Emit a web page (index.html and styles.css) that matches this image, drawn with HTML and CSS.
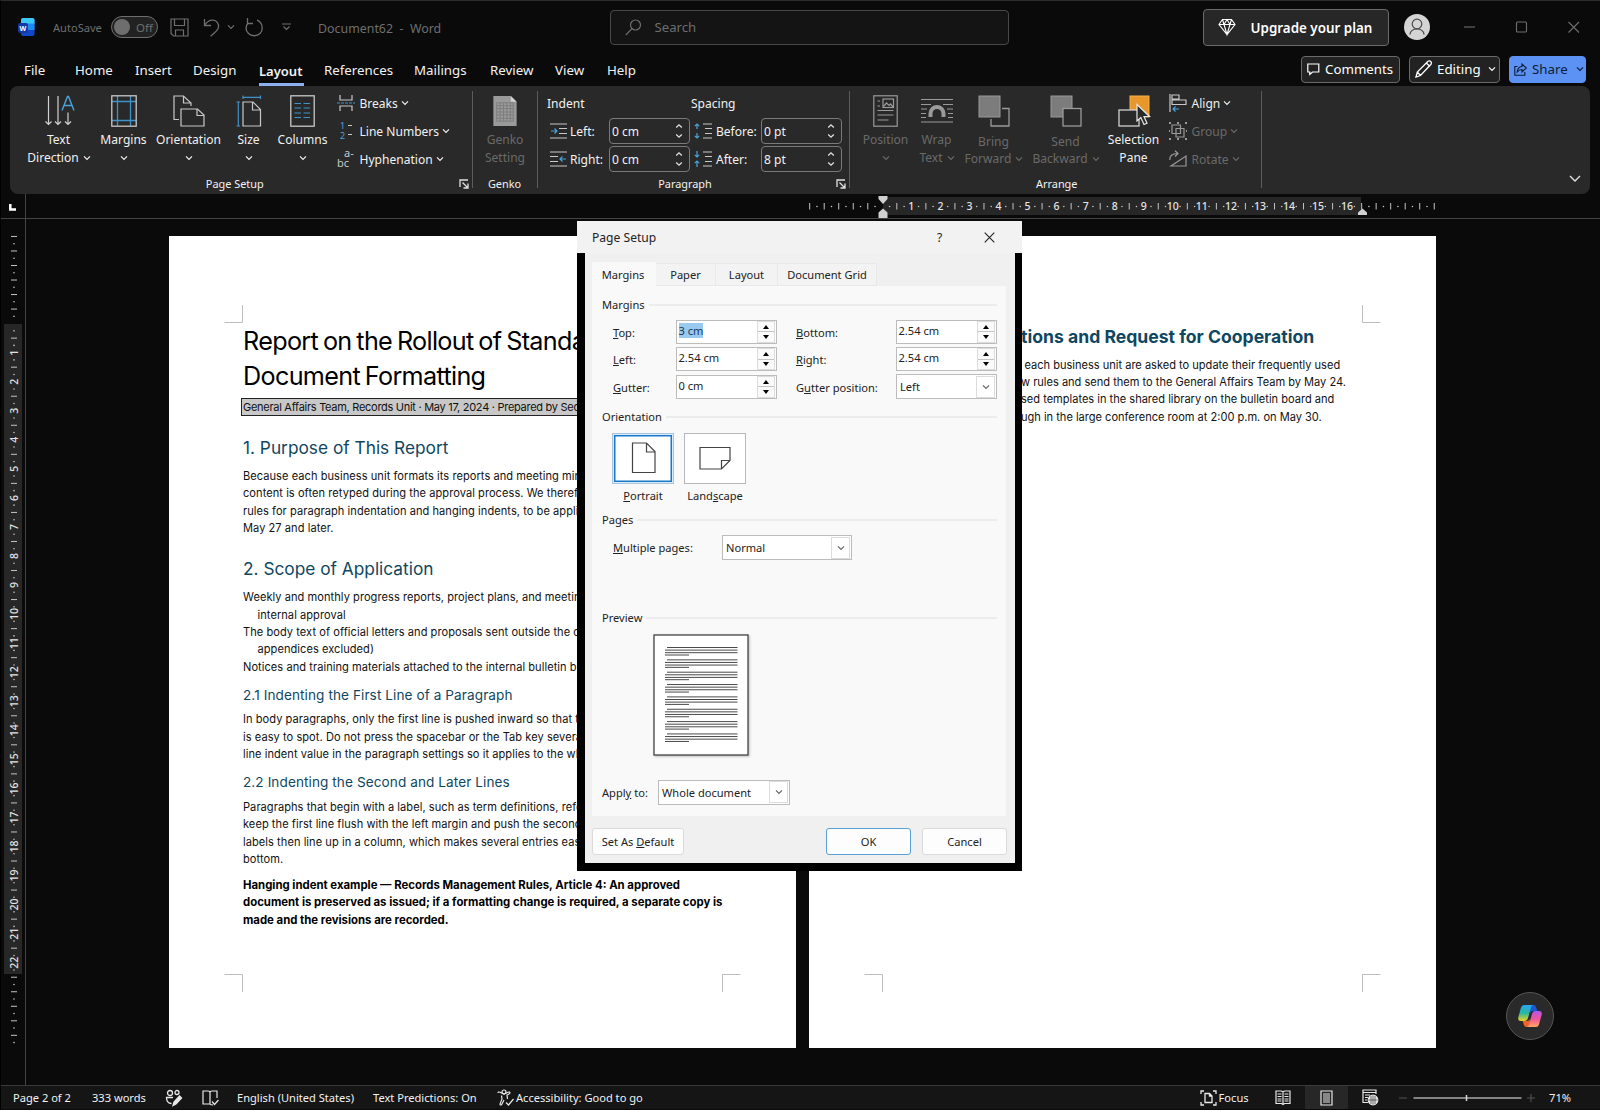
FILE: index.html
```html
<!DOCTYPE html>
<html lang="en">
<head>
  <meta charset="UTF-8" />
  <title>Document62 - Word</title>
  <link rel="stylesheet" href="styles.css">
</head>
<body>

  <!-- shared icon shapes -->
  <svg class="defs" width="0" height="0">
    <symbol id="chev" viewBox="0 0 8 6"><path d="M1 1.3 4 4.3 7 1.3" fill="none" stroke="currentColor" stroke-width="1.2"/></symbol>
    <symbol id="launcher" viewBox="0 0 11 10"><path d="M1 8V1h8M3.5 3.5l5 5M9 4.5V9H4.5" fill="none" stroke="#e0e0e0" stroke-width="1.3"/></symbol>
    <symbol id="updown" viewBox="0 0 8 16"><path d="M1.2 4.5 4 1.8l2.8 2.7M1.2 11.5 4 14.2l2.8-2.7" fill="none" stroke="#e0e0e0" stroke-width="1.3"/></symbol>
  </svg>

  <header class="titlebar">
    <svg class="word-logo" width="17" height="18" viewBox="0 0 17 18">
      <rect x="3" y="0" width="13.5" height="18" rx="2" fill="#1148c8"/>
      <path d="M5 0h9.500q2 0 2 2v4H3V2q0-2 2-2z" fill="#3cc8f5"/>
      <rect x="3" y="5.500" width="13.500" height="6.500" fill="#1c8cf0"/>
      <rect x="0" y="5" width="10" height="10" rx="2" fill="#1238a8"/>
      <text x="5" y="12.500" text-anchor="middle" class="logo-letter">W</text>
    </svg>
    <span class="autosave">AutoSave</span>
    <span class="toggle"><i></i>Off</span>
    <svg class="i-save" width="19" height="19" viewBox="0 0 19 19" fill="none" stroke="#6e6e6e" stroke-width="1.2"><path d="M1 1h17v17H3.500L1 15.500zM4.500 1v6.500h10V1M5.500 18v-6h8v6"/></svg>
    <svg class="i-undo" width="17" height="19" viewBox="0 0 17 19" fill="none" stroke="#6e6e6e" stroke-width="1.3"><path d="M1.500 1v6.500H8M1.500 7.500C4 3.500 7 2 10 2.200c4 .3 6 3.600 5.500 7-.4 3-4 6-8 9"/></svg>
    <svg class="i-undo-more" width="8" height="6"><use href="#chev"/></svg>
    <svg class="i-redo" width="19" height="20" viewBox="0 0 19 20" fill="none" stroke="#6e6e6e" stroke-width="1.3"><path d="M2.500 1v5.500H8M3 6C.5 9.500.5 13.500 3.500 16.500s8.500 3 11.500 0 3-8.500 0-11.500c-.8-.8-2-1.500-3-1.800"/></svg>
    <svg class="i-custom" width="9" height="8" viewBox="0 0 9 8" fill="none" stroke="#6e6e6e" stroke-width="1.200"><path d="M0 1h9M1.500 3.500l3 3 3-3"/></svg>
    <span class="doc-name">Document62&nbsp; -&nbsp; Word</span>
    <div class="search">
      <svg width="17" height="17" viewBox="0 0 17 17" fill="none" stroke="#6e6e6e" stroke-width="1.200"><circle cx="10.500" cy="6" r="5"/><path d="M7 9.700.8 16"/></svg>
      <span>Search</span>
    </div>
    <div class="upgrade">
      <svg width="18" height="18" viewBox="0 0 18 18" fill="none" stroke="#fff" stroke-width="1.100"><path d="M4.500 1.500h9L17 6.500 9 16.500 1 6.500zM1 6.500h16M4.500 1.500 6 6.500l3 10 3-10 1.500-5M6 6.500l3-5 3 5"/></svg>
      <span>Upgrade your plan</span>
    </div>
    <svg class="avatar" width="26" height="26" viewBox="0 0 26 26"><circle cx="13" cy="13" r="13" fill="#d4d4d4"/><g fill="none" stroke="#4a4a4a" stroke-width="1.200"><circle cx="13" cy="10" r="4.800"/><path d="M5.800 20.500c.8-3.700 3.500-5.500 7.200-5.500s6.400 1.800 7.200 5.500"/></g></svg>
    <svg class="win-buttons" width="116" height="14" viewBox="0 0 116 14" fill="none" stroke="#6e6e6e" stroke-width="1.100"><path d="M0 7h11"/><rect x="52.500" y="2" width="10" height="10" rx="1"/><path d="m104.500 2 10.500 10.500M115 2l-10.500 10.500"/></svg>
  </header>

  <nav class="tabs">
    <span>File</span><span>Home</span><span>Insert</span><span>Design</span><span class="active">Layout</span><span>References</span><span>Mailings</span><span>Review</span><span>View</span><span>Help</span>
    <div class="tab-button comments">
      <svg width="13" height="13" viewBox="0 0 13 13" fill="none" stroke="#fff" stroke-width="1.200"><path d="M.8 1h11v8H5.500L2.800 11.500V9h-2z"/></svg>Comments
    </div>
    <div class="tab-button editing">
      <svg width="18" height="18" viewBox="0 0 18 18" fill="none" stroke="#fff" stroke-width="1.300"><path d="m1 17 1.300-5L13 1.300q1.500-1 2.800.2t.2 2.800L5.500 15.500zM11.300 3 15 6.500M2.300 12l3.200 3.500"/></svg>Editing<svg class="chev" width="8" height="6"><use href="#chev"/></svg>
    </div>
    <div class="tab-button share">
      <svg width="13" height="13" viewBox="0 0 13 13" fill="none" stroke="#0d1c3a" stroke-width="1.100"><path d="M3.500 3.500H.8v8.700h10V9M8 1v2.500C5 3.700 3.500 5.500 3.200 9c1.500-2 3-2.500 4.800-2.500V9l4.300-4z"/></svg>Share<svg class="chev" width="8" height="6"><use href="#chev"/></svg>
    </div>
  </nav>

  <section class="ribbon">
    <div class="group g-setup">
      <div class="tools">
        <div class="big b-direction">
          <svg width="30" height="32" viewBox="0 0 30 32" fill="none"><path d="M4.500 1v28M1.500 26.500l3 3 3-3M14 1v28M11 26.500l3 3 3-3M24 17.500V29M21 26.500l3 3 3-3" stroke="#d0d0d0" stroke-width="1.200"/><path d="m18 15.500 5.500-14h1l5.500 14M20 10.500h8" stroke="#4aa3dc" stroke-width="1.400"/></svg>
          <b>Text</b><b>Direction <svg class="chev" width="8" height="6"><use href="#chev"/></svg></b>
        </div>
        <div class="big b-margins">
          <svg width="26" height="32" viewBox="0 0 26 32" fill="none"><path d="M6.500 1v30M19.500 1v30M1 6.500h24M1 25.500h24" stroke="#3f93c9" stroke-width="1.300"/><rect x=".8" y=".8" width="24.400" height="30.400" stroke="#c8c8c8" stroke-width="1.300"/></svg>
          <b>Margins</b><b><svg class="chev" width="8" height="6"><use href="#chev"/></svg></b>
        </div>
        <div class="big b-orient">
          <svg width="32" height="32" viewBox="0 0 32 32" fill="none" stroke="#c8c8c8" stroke-width="1.200"><path d="M6 24.500H1V1h9.500L18 8v3M10.500 1v7H18M8 14h16.500l6.500 6v11H8zM24 14v6.500h7"/></svg>
          <b>Orientation</b><b><svg class="chev" width="8" height="6"><use href="#chev"/></svg></b>
        </div>
        <div class="big b-size">
          <svg width="26" height="32" viewBox="0 0 26 32" fill="none" stroke-width="1.200"><path d="M7 7h10l7.500 7.500V31H7zM16.500 7v8h8" stroke="#c8c8c8"/><path d="M7 2.300h17.500M7 .5v3.600M24.500.5v3.600M2.300 7v24M.5 7h3.600M.5 31h3.600" stroke="#3f93c9"/></svg>
          <b>Size</b><b><svg class="chev" width="8" height="6"><use href="#chev"/></svg></b>
        </div>
        <div class="big b-columns">
          <svg width="25" height="32" viewBox="0 0 25 32" fill="none"><rect x=".8" y=".8" width="23.400" height="30.400" stroke="#c8c8c8" stroke-width="1.300"/><path d="M4.500 8.500H11M4.500 13H11M4.500 18H11M4.500 22.500H11M13.500 8.500H20M13.500 13H20M13.500 18H20M13.500 22.500H20" stroke="#3f93c9" stroke-width="1.200"/></svg>
          <b>Columns</b><b><svg class="chev" width="8" height="6"><use href="#chev"/></svg></b>
        </div>
        <div class="small-rows">
          <div>
            <svg width="18" height="18" viewBox="0 0 18 18" fill="none" stroke-width="1.200"><path d="M3 1v5h12V1M3 17v-5h12v5" stroke="#c8c8c8"/><path d="M0 9h18" stroke="#3f93c9" stroke-dasharray="3 1"/></svg>
            Breaks <svg class="chev" width="8" height="6"><use href="#chev"/></svg>
          </div>
          <div>
            <svg width="18" height="18" viewBox="0 0 18 18"><text x="3" y="7" class="mini blue">1</text><text x="3" y="17" class="mini blue">2</text><path d="M11 3.500h4M11 12.500h4" stroke="#c8c8c8" stroke-width="1.200"/></svg>
            Line Numbers <svg class="chev" width="8" height="6"><use href="#chev"/></svg>
          </div>
          <div>
            <svg width="18" height="20" viewBox="0 0 18 20"><text x="7" y="7.500" class="mini hy">a-</text><text x="0" y="17.500" class="mini hy">bc</text></svg>
            Hyphenation <svg class="chev" width="8" height="6"><use href="#chev"/></svg>
          </div>
        </div>
      </div>
      <div class="group-name">Page Setup<svg width="11" height="10"><use href="#launcher"/></svg></div>
    </div>

    <div class="group g-genko">
      <div class="tools">
        <div class="big b-genko off">
          <svg width="26" height="32" viewBox="0 0 26 33"><path d="M1 1h18l6 6v25H1z" fill="#9a9a9a"/><path d="M19 1v6h6z" fill="#d0d0d0"/><path d="M4.500 8h17v19h-17zM4.500 11h17M4.500 14h17M4.500 17.500h17M4.500 20.500h17M4.500 24h17M8 8v19M11.500 8v19M15 8v19M18.500 8v19" fill="none" stroke="#777" stroke-width=".8"/></svg>
          <b>Genko</b><b>Setting</b>
        </div>
      </div>
      <div class="group-name">Genko</div>
    </div>

    <div class="group g-para">
      <div class="para-grid">
        <span class="para-head">Indent</span><span class="para-head">Spacing</span>
        <label><svg width="17" height="16" viewBox="0 0 17 16" fill="none" stroke-width="1.200"><path d="M0 1h17M9 5.500h8M9 10.500h8M0 15h17" stroke="#c8c8c8"/><path d="M1 8h6M4.500 5.500 7 8l-2.500 2.500" stroke="#4aa3dc"/></svg>Left:</label>
        <div class="spin">0 cm<svg width="8" height="16"><use href="#updown"/></svg></div>
        <label><svg width="19" height="16" viewBox="0 0 19 16" fill="none" stroke-width="1.200"><path d="M9 1h9M11 5.500h7M11 10.500h7M9 15h9" stroke="#c8c8c8"/><path d="M3 1v5M.8 3.200 3 1l2.200 2.200M3 10v5M.8 12.800 3 15l2.200-2.200" stroke="#4aa3dc"/></svg>Before:</label>
        <div class="spin">0 pt<svg width="8" height="16"><use href="#updown"/></svg></div>
        <label><svg width="17" height="16" viewBox="0 0 17 16" fill="none" stroke-width="1.200"><path d="M0 1h17M0 5.500h8M0 10.500h8M0 15h17" stroke="#c8c8c8"/><path d="M16 8h-6M12.500 5.500 10 8l2.500 2.500" stroke="#4aa3dc"/></svg>Right:</label>
        <div class="spin">0 cm<svg width="8" height="16"><use href="#updown"/></svg></div>
        <label><svg width="19" height="16" viewBox="0 0 19 16" fill="none" stroke-width="1.200"><path d="M9 1h9M11 5.500h7M11 10.500h7M9 15h9" stroke="#c8c8c8"/><path d="M3 0v6M.8 3.800 3 6l2.200-2.200M3 16v-6M.8 12.200 3 10l2.200 2.200" stroke="#4aa3dc"/></svg>After:</label>
        <div class="spin">8 pt<svg width="8" height="16"><use href="#updown"/></svg></div>
      </div>
      <div class="group-name">Paragraph<svg width="11" height="10"><use href="#launcher"/></svg></div>
    </div>

    <div class="group g-arrange">
      <div class="tools">
        <div class="big b-position off">
          <svg width="25" height="32" viewBox="0 0 25 32" fill="none" stroke="#9a9a9a" stroke-width="1.200"><rect x=".8" y=".8" width="23.400" height="30.400"/><rect x="10" y="4" width="10.500" height="8.500"/><path d="m10.500 11.500 3-3.500 2.500 2.500 1.500-1.500 2.500 3M4.500 6h2.500M4.500 11H7M4.500 15.500h16M4.500 20h16M4.500 25h11"/></svg>
          <b>Position</b><b><svg class="chev" width="8" height="6"><use href="#chev"/></svg></b>
        </div>
        <div class="big b-wrap off">
          <svg width="32" height="32" viewBox="0 0 32 32" fill="none" stroke="#9a9a9a" stroke-width="1.200"><path d="M0 4.500h32M0 9.500h10M22 9.500h10M0 14h6M26 14h6M0 18.500h5M27 18.500h5M0 22.500h5M27 22.500h5M0 27h32"/><path d="M9.500 22v-3.500a6.500 6.500 0 0 1 13 0V22" stroke-width="4"/></svg>
          <b>Wrap</b><b>Text <svg class="chev" width="8" height="6"><use href="#chev"/></svg></b>
        </div>
        <div class="big b-bring off low">
          <svg width="32" height="32" viewBox="0 0 32 32"><path d="M24 13.500h7V31H13v-7" fill="none" stroke="#9a9a9a" stroke-width="1.300"/><rect x="1" y="1" width="21" height="21" fill="#7c7c7c" stroke="#9a9a9a"/></svg>
          <b>Bring</b><b>Forward <svg class="chev" width="8" height="6"><use href="#chev"/></svg></b>
        </div>
        <div class="big b-send off low">
          <svg width="32" height="32" viewBox="0 0 32 32"><rect x="1" y="1" width="21" height="21" fill="#7c7c7c" stroke="#9a9a9a"/><rect x="13" y="13.500" width="18" height="17.500" fill="#292929" stroke="#9a9a9a" stroke-width="1.300"/></svg>
          <b>Send</b><b>Backward <svg class="chev" width="8" height="6"><use href="#chev"/></svg></b>
        </div>
        <div class="big b-selection">
          <svg width="32" height="32" viewBox="0 0 32 32"><rect x="12" y="1" width="19" height="21" fill="#e8982a" stroke="#f4b04a"/><rect x="1" y="15" width="20" height="16" fill="#292929" stroke="#d0d0d0" stroke-width="1.300"/></svg>
          <svg class="cursor" width="15" height="24" viewBox="0 0 15 24"><path d="M1 1.500V18l3.800-3.500L8 21.500l3-1.300-3-6.700h5.500z" fill="#292929" stroke="#e8e8e8" stroke-width="1.200"/></svg>
          <b>Selection</b><b>Pane</b>
        </div>
        <div class="small-rows">
          <div>
            <svg width="18" height="18" viewBox="0 0 18 18" fill="none" stroke="#c8c8c8" stroke-width="1.200"><path d="M1 0v18M3 1h7v4H3zM3 6h14v4.500H3z"/><path d="M10 15H4M6.500 12.500 4 15l2.500 2.500" stroke="#4aa3dc"/></svg>
            Align <svg class="chev" width="8" height="6"><use href="#chev"/></svg>
          </div>
          <div class="off">
            <svg width="18" height="18" viewBox="0 0 18 18" fill="none" stroke="#9a9a9a" stroke-width="1.200"><path d="M3 3h8.500v8.500H3zM7 6.500h8v8.500H7z"/><path d="M0 1h2M16 1h2M0 17h2M16 17h2M8 1h2M8 17h2M0 9h1M17 9h1" stroke-width="2"/></svg>
            Group <svg class="chev" width="8" height="6"><use href="#chev"/></svg>
          </div>
          <div class="off">
            <svg width="18" height="18" viewBox="0 0 18 18" fill="none" stroke="#9a9a9a" stroke-width="1.200"><path d="M2 16h15V6zM.8 10C.5 6 3 3.500 8.500 3.500M6 .8l3 2.700L6 6.500"/></svg>
            Rotate <svg class="chev" width="8" height="6"><use href="#chev"/></svg>
          </div>
        </div>
      </div>
      <div class="group-name">Arrange</div>
    </div>
    <svg class="collapse" width="12" height="8" viewBox="0 0 12 8"><path d="m1 1 5 5 5-5" fill="none" stroke="#e0e0e0" stroke-width="1.400"/></svg>
  </section>

  <div class="ruler-row">
    <div class="corner"><svg width="7" height="7" viewBox="0 0 7 7"><path d="M1.300 0v5.500H7" fill="none" stroke="#fff" stroke-width="2.500"/></svg></div>
    <svg id="h-ruler" class="ruler" width="1574" height="24" viewBox="26 194 1574 24"></svg>
  </div>

  <main class="workspace">
    <div class="v-ruler"><svg id="v-ruler" class="ruler" width="25" height="866" viewBox="0 219 25 866"></svg></div>
    <div class="pages">
      <article class="page first">
        <svg class="crop" width="627" height="812" viewBox="0 0 627 812"><path d="M73.500 69v17.500H55.500M73.500 756v-17.500H55.500M553.500 756v-17.500H571.500" fill="none" stroke="#bdbdbd"/></svg>
        <h1>Report on the Rollout of Standar<br>Document Formatting</h1>
        <p class="byline">General Affairs Team, Records Unit · May 17, 2024 · Prepared by Secr</p>
        <h2>1. Purpose of This Report</h2>
        <p>Because each business unit formats its reports and meeting min<br>content is often retyped during the approval process. We therefo<br>rules for paragraph indentation and hanging indents, to be appli<br>May 27 and later.</p>
        <h2 class="spaced">2. Scope of Application</h2>
        <p class="hanging">Weekly and monthly progress reports, project plans, and meetin<br><span>internal approval</span><br>The body text of official letters and proposals sent outside the co<br><span>appendices excluded)</span><br>Notices and training materials attached to the internal bulletin b</p>
        <h3>2.1 Indenting the First Line of a Paragraph</h3>
        <p>In body paragraphs, only the first line is pushed inward so that th<br>is easy to spot. Do not press the spacebar or the Tab key several<br>line indent value in the paragraph settings so it applies to the wh</p>
        <h3>2.2 Indenting the Second and Later Lines</h3>
        <p>Paragraphs that begin with a label, such as term definitions, refe<br>keep the first line flush with the left margin and push the second<br>labels then line up in a column, which makes several entries eas<br>bottom.</p>
        <p class="strong">Hanging indent example — Records Management Rules, Article 4: An approved<br>document is preserved as issued; if a formatting change is required, a separate copy is<br>made and the revisions are recorded.</p>
      </article>
      <article class="page second">
        <svg class="crop" width="627" height="812" viewBox="0 0 627 812"><path d="M553.500 69v17.500H571.500M73.500 756v-17.500H55.500M553.500 756v-17.500H571.500" fill="none" stroke="#bdbdbd"/></svg>
        <h2>tions and Request for Cooperation</h2>
        <p><span>each business unit are asked to update their frequently used</span><br>w rules and send them to the General Affairs Team by May 24.<br>sed templates in the shared library on the bulletin board and<br>ugh in the large conference room at 2:00 p.m. on May 30.</p>
      </article>
    </div>

    <div class="copilot">
      <svg width="26" height="24" viewBox="0 0 26 24">
        <defs>
          <linearGradient id="cp1" x1="0" y1="0" x2="0" y2="1"><stop offset="0" stop-color="#2aa5f5"/><stop offset=".5" stop-color="#25b8a0"/><stop offset="1" stop-color="#f5d020"/></linearGradient>
          <linearGradient id="cp2" x1="0" y1="0" x2="0" y2="1"><stop offset="0" stop-color="#b057f0"/><stop offset=".5" stop-color="#f0559a"/><stop offset="1" stop-color="#ffa860"/></linearGradient>
        </defs>
        <path d="M13 1h3.500q2 0 2.600 2l1.200 4h-4.500q-2 0-2.600 2z" fill="#1b58d8"/>
        <path d="M13 23H9.500q-2 0-2.600-2l-1.200-4h4.500q2 0 2.600-2z" fill="#f0622d"/>
        <path d="M7 1h9q-1.500.3-2 2.500L11 14q-.8 3-3.500 3H4q-3.500 0-2.600-4L4 3.500Q4.800 1 7 1z" fill="url(#cp1)"/>
        <path d="M19 23h-9q1.500-.3 2-2.500L15 10q.8-3 3.500-3H22q3.500 0 2.600 4L22 20.500q-.8 2.500-3 2.500z" fill="url(#cp2)"/>
      </svg>
    </div>
  </main>

  <footer class="status">
    <span class="s-page">Page 2 of 2</span>
    <span class="s-words">333 words</span>
    <svg class="s-collab" width="17" height="18" viewBox="0 0 17 18" fill="none" stroke="#e8e8e8" stroke-width="1.300"><circle cx="5" cy="4" r="2.500"/><circle cx="12" cy="3.500" r="2"/><path d="M8 8.500H1.500c0 4 2 6 5 6"/><path d="m8 16.500 1-3.500 5.500-6 2 2-5.500 6z" fill="#e8e8e8"/></svg>
    <svg class="s-proof" width="17" height="18" viewBox="0 0 17 18" fill="none" stroke="#e8e8e8" stroke-width="1.200"><path d="M8 3v12H1V2h5q2 0 2 1.500Q8 2 10 2h5v7M8 15.500l3 .5M10 12.500l2.500 3L16.500 11"/></svg>
    <span class="s-lang">English (United States)</span>
    <span class="s-pred">Text Predictions: On</span>
    <svg class="s-acc" width="17" height="18" viewBox="0 0 17 18" fill="none" stroke="#e8e8e8" stroke-width="1.200"><circle cx="7" cy="3" r="2"/><path d="M1 4q0-1.500 2-.7l4 1.700 4-1.700q2-.8 2 .7 0 .8-3 2l.5 4M4.500 6.500 5 10l-2 5q0 1.500 1.500.7L7 11M9 13.500l2.500 2.500 5-6"/></svg>
    <span class="s-good">Accessibility: Good to go</span>
    <div class="views">
      <svg width="17" height="16" viewBox="0 0 17 16" fill="none" stroke="#e8e8e8" stroke-width="1.300"><path d="M1 4V1h3M13 1h3v3M1 12v3h3M13 15h3v-3M5 3.500h4.500L12 6v6.500H5zM9.500 3.500V6H12"/></svg>
      <span class="s-focus">Focus</span>
      <svg class="v-read" width="16" height="15" viewBox="0 0 16 15" fill="none" stroke="#e8e8e8" stroke-width="1.200"><path d="M8 2v12M1 1h5.500L8 2l1.500-1H15v12.500H9.500L8 14.500l-1.500-1H1zM2.500 4h4M2.500 6.500h4M2.500 9h4M2.500 11h4M9.500 4h4M9.500 6.500h4M9.500 9h4M9.500 11h4"/></svg>
      <span class="v-print"><svg width="13" height="16" viewBox="0 0 13 16" fill="none" stroke="#e8e8e8" stroke-width="1.200"><path d="M1 1h11v14H1zM3 4h7M3 6h7M3 8h7M3 10h7M3 12h7"/></svg></span>
      <svg class="v-web" width="17" height="17" viewBox="0 0 17 17" fill="none" stroke="#e8e8e8" stroke-width="1.200"><path d="M6 13.500H1V1h13v4M1 3.500h13M3 6h5M3 8.500h3M3 11h2"/><circle cx="11" cy="11" r="4.800" fill="#e8e8e8"/><path d="M6.500 11h9M11 6.500v9M9 7v8M13 7v8" stroke="#333" stroke-width=".7"/></svg>
      <svg class="zoom" width="136" height="10" viewBox="0 0 136 10" fill="none"><path d="M0 5h8M128 5h8M132 1v8" stroke="#555"/><path d="M14.500 5h108" stroke="#a8a8a8" stroke-width="1.500"/><path d="M67.500 2v6" stroke="#d8d8d8" stroke-width="1.500"/></svg>
      <span class="s-zoom">71%</span>
    </div>
  </footer>

  <div class="dialog">
    <div class="dlg-title"><span>Page Setup</span><i>?</i>
      <svg width="11" height="11" viewBox="0 0 11 11"><path d="m.7.700 9.600 9.600M10.300.7.700 10.300" stroke="#222" stroke-width="1.100"/></svg>
    </div>
    <div class="dlg-body">
      <div class="dlg-tabs"><span class="on">Margins</span><span>Paper</span><span>Layout</span><span>Document Grid</span></div>
      <div class="panel">
        <div class="legend">Margins</div>
        <div class="fields">
          <span><u>T</u>op:</span><div class="num"><mark>3 cm</mark><i></i></div>
          <span class="c2"><u>B</u>ottom:</span><div class="num">2.54 cm<i></i></div>
          <span><u>L</u>eft:</span><div class="num">2.54 cm<i></i></div>
          <span class="c2"><u>R</u>ight:</span><div class="num">2.54 cm<i></i></div>
          <span><u>G</u>utter:</span><div class="num">0 cm<i></i></div>
          <span class="c2">G<u>u</u>tter position:</span><div class="combo">Left<b><svg width="8" height="6"><use href="#chev"/></svg></b></div>
        </div>
        <div class="legend l-orient">Orientation</div>
        <div class="orient">
          <div class="pick on"><div><svg width="25" height="32" viewBox="0 0 25 32"><path d="M1.500 1h14L24 9.500V30.500H1.500zM15.500 1v9H24" fill="none" stroke="#444" stroke-width="1.200"/></svg></div><u>P</u>ortrait</div>
          <div class="pick"><div><svg width="32" height="24" viewBox="0 0 32 24"><path d="M1 1.500h30v13l-8.500 8.500H1zM22.500 23v-8.500H31" fill="none" stroke="#444" stroke-width="1.200"/></svg></div>Land<u>s</u>cape</div>
        </div>
        <div class="legend l-pages">Pages</div>
        <div class="multi"><span><u>M</u>ultiple pages:</span><div class="combo">Normal<b><svg width="8" height="6"><use href="#chev"/></svg></b></div></div>
        <div class="legend l-preview">Preview</div>
        <svg id="preview" class="preview" width="96" height="122" viewBox="0 0 96 122"></svg>
        <div class="apply"><span>Appl<u>y</u> to:</span><div class="combo">Whole document<b><svg width="8" height="6"><use href="#chev"/></svg></b></div></div>
      </div>
      <div class="dlg-buttons"><span class="btn">Set As <u>D</u>efault</span><span class="btn ok">OK</span><span class="btn cancel">Cancel</span></div>
    </div>
  </div>

  <script>
    const UNIT = 29.05; // one centimetre at 71% zoom

    // half-unit steps carry ticks, quarters carry dots
    function marks(from, to, limit, draw) {
      for (let q = from * 4; q <= to * 4; q++) {
        const v = q / 4;
        if (v === 0 || v === limit) continue;
        if (q % 2 !== 0) draw(v, 'dot');
        else if (v > 0 && v < limit && q % 4 === 0) draw(v, 'num');
        else draw(v, 'tick');
      }
    }

    let h = '<rect x="883" y="197" width="478" height="18" fill="#272727"/>';
    marks(-2.5, 19, 16.52, (v, kind) => {
      const x = 882.3 + v * UNIT;
      if (kind === 'num') h += `<text x="${x}" y="210" text-anchor="middle">${v}</text>`;
      else if (kind === 'tick') h += `<path d="M${x} 203v6.500"/>`;
      else h += `<circle cx="${x}" cy="206.500" r=".8"/>`;
    });
    h += '<path class="mark" d="M878.500 196h9v3l-4.500 5-4.500-5zM883 208.500l4.500 4v5.500h-9v-5.500zM1362.500 208.500l4.500 4v2.500h-9v-2.500z"/>';
    document.getElementById('h-ruler').innerHTML = h;

    let v = '<rect x="4" y="324" width="18" height="650" fill="#272727"/>';
    marks(-3, 24.75, 22.4, (n, kind) => {
      const y = 323.6 + n * UNIT;
      if (kind === 'num') v += `<text transform="translate(18 ${y}) rotate(-90)" text-anchor="middle">${n}</text>`;
      else if (kind === 'tick') v += `<path d="M11 ${y}h6"/>`;
      else v += `<circle cx="14" cy="${y}" r=".8"/>`;
    });
    document.getElementById('v-ruler').innerHTML = v;

    let p = '<rect x="1" y="1" width="94" height="120" fill="#fff" stroke="#444" stroke-width="1.300"/>';
    for (let i = 0; i < 8; i++) {
      const y = 13.5 + i * 12.35;
      p += `<path d="M14 ${y}h70.500M12 ${y + 2.6}h72.500M12 ${y + 5.2}h72.500M12 ${y + 7.5}h24" stroke="#4a4a4a" stroke-width="1"/>`;
    }
    document.getElementById('preview').innerHTML = p;
  </script>

</body>
</html>
```
FILE: styles.css
```css
* {
  box-sizing: border-box;
}

body {
  margin: 0;
  width: 1600px;
  height: 1110px;
  overflow: hidden;
  position: relative;
  display: flex;
  flex-direction: column;
  background: #0a0a0a;
  color: #f2f2f2;
  font-family: "Noto Sans", "Open Sans", sans-serif;
  font-size: 12.05px;
  border-top: 1px solid #2c2c2c;
  border-left: 1px solid #000;
  white-space: nowrap;
}

svg {
  display: block;
  flex: none;
  overflow: visible;
}

.defs {
  position: absolute;
}

/* title bar */

.titlebar {
  height: 52px;
  flex: none;
  display: flex;
  align-items: center;
  color: #6e6e6e;
  padding-left: 17px;
}

.logo-letter {
  font: bold 7px "Noto Sans", sans-serif;
  fill: #fff;
}

.autosave {
  margin-left: 18px;
  width: 58px;
  font-size: 11.1px;
}

.toggle {
  width: 47px;
  height: 22px;
  border: 1px solid #6e6e6e;
  border-radius: 11px;
  background: #222;
  display: flex;
  align-items: center;
  font-size: 11.5px;
}

.toggle i {
  width: 16px;
  height: 16px;
  border-radius: 50%;
  background: #6e6e6e;
  margin: 0 6px 0 2px;
}

.i-save { margin-left: 12px; }
.i-undo { margin-left: 14px; }
.i-undo-more { margin-left: 7px; }
.i-redo { margin-left: 10px; }
.i-custom { margin-left: 18px; }

.doc-name {
  margin-left: 27px;
  width: 291.5px;
  font-size: 12.4px;
  padding-top: 2px;
}

.search {
  width: 399px;
  height: 35px;
  border: 1px solid #484848;
  border-radius: 4px;
  background: #141414;
  display: flex;
  align-items: center;
  padding-left: 14px;
  font-size: 13.2px;
}

.search span {
  margin-left: 13px;
}

.upgrade {
  width: 186px;
  height: 37px;
  margin-left: 194px;
  border: 1px solid #6a6a6a;
  border-radius: 4px;
  background: #272727;
  color: #fff;
  display: flex;
  align-items: center;
  padding-left: 14px;
  font-size: 13.4px;
  font-weight: 600;
}

.upgrade span {
  margin-left: 15px;
  padding-top: 1px;
}

.avatar { margin-left: 15px; }
.win-buttons { margin-left: 34px; }

/* ribbon tabs */

.tabs {
  height: 33px;
  flex: none;
  display: grid;
  grid-template-columns: 51px 60px 58px 66px 65px 90px 76px 65px 52px 694px 108px 100px 78px;
  align-items: center;
  padding-left: 23px;
  font-size: 13.3px;
}

.tabs .active {
  font-weight: 600;
  font-size: 13px;
  width: 45px;
  padding: 5px 0 3px;
  margin-bottom: -4px;
  border-bottom: 3px solid #8fb0ee;
}

.tab-button {
  height: 27px;
  margin-top: -1px;
  border: 1px solid #6a6a6a;
  border-radius: 4px;
  background: #222;
  color: #fff;
  display: flex;
  align-items: center;
}

.comments {
  width: 99px;
  padding-left: 5px;
  gap: 5px;
}

.editing {
  width: 91px;
  padding-left: 5px;
  gap: 4px;
}

.share {
  width: 77px;
  padding-left: 4px;
  gap: 5px;
  background: #5b92f3;
  border-color: #5b92f3;
  color: #0d1c3a;
}

.editing .chev,
.share .chev {
  margin-left: 3px;
}

/* ribbon */

.ribbon {
  height: 108px;
  width: 1580px;
  flex: none;
  margin-left: 9px;
  border-radius: 8px;
  background: #292929;
  display: flex;
  padding-top: 5px;
  position: relative;
}

.group {
  height: 97px;
  border-right: 1px solid #5c5c5c;
}

.g-setup { width: 463px; padding-left: 16.5px; }
.g-genko { width: 65px; }
.g-para { width: 312px; padding-left: 9px; }
.g-arrange { width: 412px; padding-left: 9.5px; }

.tools {
  height: 84px;
  display: flex;
  align-items: flex-start;
}

.big {
  display: flex;
  flex-direction: column;
  align-items: center;
  padding-top: 4px;
  position: relative;
}

.big b {
  font-weight: normal;
  height: 18px;
  line-height: 18px;
  display: flex;
  align-items: center;
}

.big > svg:first-child {
  margin-bottom: 4px;
}

.big.low > svg:first-child {
  margin-bottom: 5.5px;
}

.big b:last-child {
  margin-top: -0.5px;
}

.big b .chev,
.small-rows .chev {
  margin-left: 3px;
}

.b-direction { width: 64px; }
.b-margins { width: 66px; }
.b-orient { width: 64px; }
.b-size { width: 56px; }
.b-columns { width: 52px; }
.b-genko { width: 64px; }
.b-position { width: 52px; }
.b-wrap { width: 50px; }
.b-bring { width: 64px; }
.b-send { width: 80px; }
.b-selection { width: 56px; }

.big b .chev:only-child {
  margin-left: 0;
}

.big.b-direction b .chev,
.big.b-wrap b .chev,
.big.b-bring b .chev,
.big.b-send b .chev {
  margin: 0 -1px 0 4px;
}

.off {
  color: #6a6a6a;
}

.cursor {
  position: absolute;
  left: 30px;
  top: 12px;
}

.small-rows {
  margin: -2px 0 0 8.5px;
}

.g-arrange .small-rows {
  margin-left: 7.5px;
}

.small-rows div {
  height: 28px;
  display: flex;
  align-items: center;
}

.small-rows svg:first-child {
  margin-right: 4.5px;
}

.mini {
  font-size: 9px;
  fill: #c8c8c8;
}

.mini.blue { fill: #4aa3dc; }
.mini.hy { font-size: 11px; }

.group-name {
  font-size: 10.9px;
  height: 18px;
  line-height: 18px;
  display: flex;
  justify-content: center;
  align-items: center;
  position: relative;
}

.g-setup .group-name { padding-right: 29px; }
.g-para .group-name { padding-right: 26px; }
.g-genko .group-name { padding-right: 1px; }
.g-arrange .group-name { padding-right: 7px; }

.group-name svg {
  position: absolute;
  right: 2px;
  top: 4px;
}

.para-grid {
  display: grid;
  grid-template-columns: 62px 82px 70px 81px;
  grid-template-rows: 28px 28px 28px;
  align-items: center;
  align-content: start;
  height: 86px;
  margin-top: -2px;
}

.para-head {
  grid-column: span 2;
}

.para-grid label {
  display: flex;
  align-items: center;
  gap: 3px;
  padding-left: 3px;
}

.spin {
  width: 81px;
  height: 26px;
  border: 1px solid #7a7a7a;
  border-radius: 4px;
  display: flex;
  align-items: center;
  justify-content: space-between;
  padding: 0 6px 0 2px;
}

.collapse {
  position: absolute;
  right: 9px;
  bottom: 11px;
}

/* rulers */

.ruler-row {
  height: 25px;
  flex: none;
  display: flex;
  border-bottom: 1px solid #444;
}

.corner {
  width: 25px;
  border-right: 1px solid #444;
  padding: 10px 0 0 8px;
}

.ruler path {
  stroke: #c4c4c4;
  stroke-width: 1;
}

.ruler circle { fill: #c4c4c4; }

.ruler text {
  fill: #e4e4e4;
  font-size: 10.5px;
  font-weight: 500;
}

.ruler .mark {
  fill: #d0d0d0;
  stroke: none;
}

.workspace {
  height: 866px;
  flex: none;
  display: flex;
  position: relative;
}

.v-ruler {
  width: 25px;
  border-right: 1px solid #444;
  margin-right: 143px;
}

.v-ruler svg {
  margin-left: -1px;
}

/* document */

.pages {
  display: flex;
  gap: 13.5px;
  padding-top: 17px;
}

.page {
  width: 626.5px;
  height: 812px;
  background: #fff;
  color: #111;
  overflow: hidden;
  position: relative;
  padding: 87.5px 0 0 74px;
  font-family: Inter, "Liberation Sans", sans-serif;
}

.crop {
  position: absolute;
  left: 0;
  top: 0;
}

.page h1 {
  margin: 0;
  font-size: 25.2px;
  font-weight: normal;
  line-height: 35px;
  letter-spacing: -0.68px;
  word-spacing: -1.6px;
  color: #000;
}

.page h2 {
  margin: 20px 0 8px;
  font-size: 17.3px;
  font-weight: normal;
  line-height: 24px;
  color: #0f4761;
}

.page h2.spaced {
  margin-top: 19.6px;
}

.page h3 {
  margin: 8.4px 0 6.8px;
  font-size: 13.6px;
  font-weight: normal;
  line-height: 20px;
  letter-spacing: 0.08px;
  color: #0f4761;
}

.page p {
  margin: 0;
  font-size: 11.05px;
  line-height: 17.4px;
}

.first p {
  letter-spacing: 0.06px;
}

.page .byline {
  margin: 4px 0 0 -2.5px;
  padding-left: 1.5px;
  width: 480px;
  height: 18.5px;
  line-height: 16.5px;
  border: 1px solid #222;
  background: #c8c8c8;
  font-size: 11px;
  letter-spacing: -0.28px;
}

.hanging span {
  padding-left: 14.5px;
}

.page .strong {
  margin-top: 8.6px;
  font-size: 11.36px;
  font-weight: bold;
  letter-spacing: 0;
  color: #000;
}

.page.second {
  padding: 88.5px 0 0 212px;
}

.second h2 {
  margin: 0 0 8px;
  font-size: 17.6px;
  font-weight: bold;
}

.second p span {
  padding-left: 3.5px;
}

.copilot {
  position: absolute;
  right: 46px;
  bottom: 45px;
  width: 48px;
  height: 48px;
  border: 1px solid #555;
  border-radius: 50%;
  background: #2a2a2a;
  display: flex;
  align-items: center;
  justify-content: center;
}

/* status bar */

.status {
  height: 24px;
  flex: none;
  border-top: 1px solid #3a3a3a;
  background: #151515;
  display: flex;
  align-items: center;
  padding-left: 12px;
  font-size: 11.1px;
}

.s-page { width: 79px; }
.s-words { width: 73px; }
.s-collab { margin-right: 20px; }
.s-proof { margin-right: 18px; }
.s-lang { width: 136px; }
.s-pred { width: 124px; }
.s-acc { margin-right: 2px; }

.views {
  margin-left: auto;
  height: 23px;
  display: flex;
  align-items: center;
  padding-right: 29px;
}

.s-focus { margin: 0 26.5px 0 2px; }

.v-print {
  width: 43px;
  height: 23px;
  margin: 0 14px;
  background: #272727;
  display: flex;
  align-items: center;
  justify-content: center;
}

.zoom { margin: 0 14px 0 20px; }

/* page setup dialog */

.dialog {
  position: absolute;
  left: 576px;
  top: 220px;
  width: 445px;
  height: 650px;
  background: #000;
  color: #222;
  font-size: 11.1px;
}

.dlg-title {
  height: 32px;
  background: #f2f2f2;
  display: flex;
  align-items: center;
  padding-left: 15px;
  font-size: 12.1px;
}

.dlg-title span { width: 345px; }

.dlg-title i {
  font-style: normal;
  width: 47px;
}

.dlg-body {
  margin: 0 7.5px;
  height: 610px;
  background: #f0f0f0;
  padding: 9px 7px 0 7.5px;
}

.dlg-tabs {
  display: flex;
  height: 24px;
}

.dlg-tabs span {
  border: 1px solid #e9e9e9;
  border-left: none;
  background: #f3f3f3;
  display: flex;
  align-items: center;
  justify-content: center;
  width: 60px;
  margin-top: 1px;
}

.dlg-tabs span:last-child { width: 99px; }

.dlg-tabs .on {
  width: 64px;
  margin: 0;
  border: none;
  padding-right: 2px;
  background: #f9f9f9;
}

.dlg-tabs .on + span + span {
  width: 62px;
}

.panel {
  width: 414px;
  height: 530px;
  background: #f9f9f9;
  padding: 9.5px 9px 0 10px;
}

.legend {
  height: 18px;
  display: flex;
  align-items: center;
  gap: 4px;
}

.legend::after {
  content: "";
  flex: 1;
  height: 2px;
  background: #ececec;
}

.fields {
  display: grid;
  grid-template-columns: 63px 101px 119px 101px;
  grid-template-rows: 24px 24px 24px;
  row-gap: 3.5px;
  align-items: center;
  margin: 6px 0 0 11px;
}

.fields .c2 {
  padding-left: 19px;
}

.fields > span {
  padding-top: 1px;
}

.num {
  height: 24px;
  border: 1px solid #bcbcbc;
  background: #fff;
  padding-left: 1.5px;
  line-height: 20px;
  position: relative;
}

.num mark {
  background: #99c9ef;
  color: #1a3a5c;
  display: inline-block;
  line-height: 15px;
}

/* spinner arrows at the right of a number field */
.num i {
  position: absolute;
  right: 1px;
  top: 0;
  width: 18px;
  height: 22px;
  border: 1px solid #dcdcdc;
  background: linear-gradient(#c4c4c4, #c4c4c4) 0 50% / 100% 1px no-repeat #fafafa;
}

.num i::before,
.num i::after {
  content: "";
  position: absolute;
  left: 5px;
  border: 3px solid transparent;
}

.num i::before {
  top: 0;
  border-bottom: 4px solid #000;
}

.num i::after {
  bottom: 0;
  border-top: 4px solid #000;
}

.combo {
  height: 25px;
  border: 1px solid #bcbcbc;
  background: #fff;
  display: flex;
  align-items: center;
  justify-content: space-between;
  padding: 0 1px 0 3px;
}

.combo b {
  width: 19px;
  height: 22px;
  border: 1px solid #dcdcdc;
  display: flex;
  align-items: center;
  justify-content: center;
  color: #666;
}

.l-orient { margin-top: 9px; }

.orient {
  display: flex;
  gap: 10px;
  margin: 7px 0 0 10px;
}

.pick {
  width: 62px;
  text-align: center;
  line-height: 16px;
}

.pick div {
  height: 51px;
  border: 1px solid #b8b8b8;
  background: #fff;
  display: flex;
  align-items: center;
  justify-content: center;
  margin-bottom: 4px;
}

.pick.on div {
  border-color: #a9c4dc;
  box-shadow: inset 0 0 0 1px #d8ecfb, inset 0 0 0 2.5px #1a78c8;
}

.l-pages { margin-top: 7px; }

.multi {
  display: flex;
  align-items: center;
  margin: 6.5px 0 0 11px;
}

.multi span { width: 109px; }
.multi .combo { width: 130px; }

.l-preview { margin-top: 48.5px; }

.preview {
  margin: 7.5px 0 23.5px 51px;
  filter: drop-shadow(1px 1px 1px #bbb);
}

.apply {
  display: flex;
  align-items: center;
}

.apply span { width: 56px; }
.apply .combo { width: 132px; }

.dlg-buttons {
  display: flex;
  margin-top: 12px;
}

.btn {
  width: 92px;
  height: 27px;
  border: 1px solid #dadada;
  border-radius: 3px;
  background: #fdfdfd;
  display: flex;
  align-items: center;
  justify-content: center;
  white-space: pre;
}

.btn.ok {
  width: 85px;
  margin: 0 11px 0 142px;
  border-color: #5a9fd6;
}

.btn.cancel { width: 85px; }
```
